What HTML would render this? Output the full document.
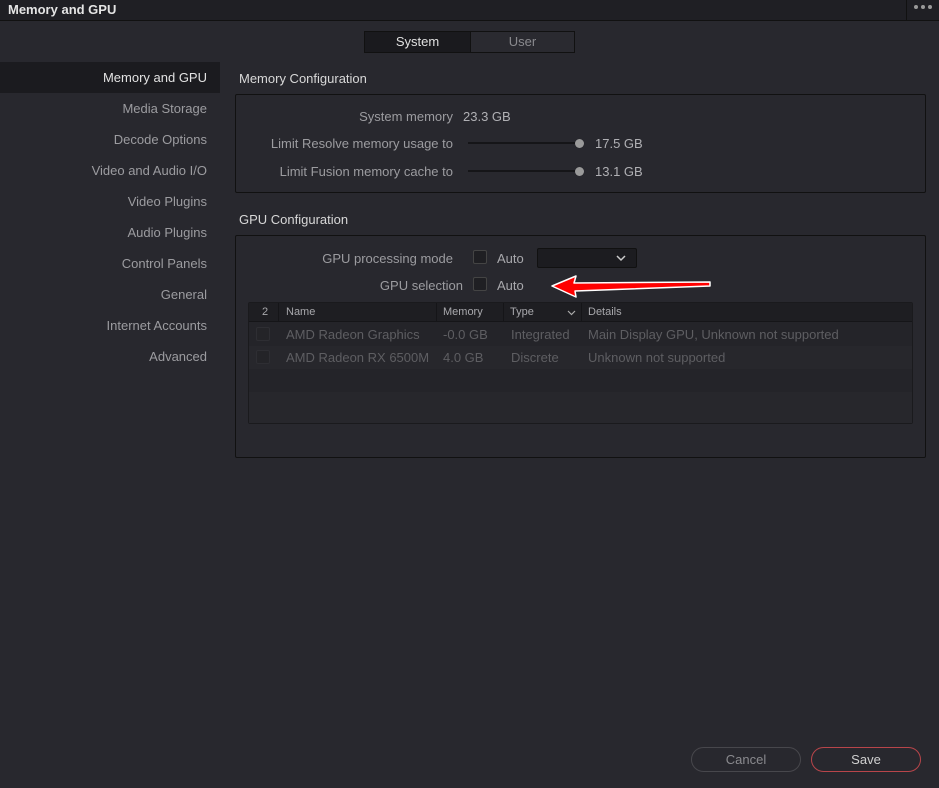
<!DOCTYPE html>
<html><head><meta charset="utf-8"><style>
*{margin:0;padding:0;box-sizing:border-box}
body{width:939px;height:788px;background:#28282e;font-family:"Liberation Sans",sans-serif;font-size:13px;color:#a8a8ac;position:relative;overflow:hidden}
.a{position:absolute;white-space:nowrap}
.title{left:0;top:0;width:939px;height:21px;background:#1f1f24;border-bottom:1px solid #111;color:#e4e4e4;font-weight:bold;font-size:13px;padding:2px 8px}
.dots{left:906px;top:0;width:1px;height:21px;background:#111}
.seg{left:364px;top:31px;width:211px;height:22px;border:1px solid #111;background:#2a2a30}
.side{right:732px;text-align:right;color:#9c9ca0}
.box{border:1px solid #111;border-radius:2px}
.cb{width:14px;height:14px;border:1px solid #444;background:#1f1f23;border-radius:2px}
.lbl{text-align:right;color:#9c9ca0}
.slider{height:2px;background:#151518}
.knob{width:9px;height:9px;border-radius:50%;background:#9a9a9a}
.btn{height:25px;border-radius:13px;text-align:center;line-height:23px;font-size:13px}
</style></head><body>
<div class="a title">Memory and GPU</div>
<div class="a dots"></div>
<svg class="a" style="left:913px;top:4px" width="20" height="6"><circle cx="3" cy="3" r="2" fill="#999"/><circle cx="10" cy="3" r="2" fill="#999"/><circle cx="17" cy="3" r="2" fill="#999"/></svg>
<div class="a seg"><div class="a" style="left:0;top:0;width:105px;height:20px;background:#1a1a1e;color:#e0e0e0;text-align:center;line-height:20px">System</div><div class="a" style="left:105px;top:0;width:1px;height:20px;background:#111"></div><div class="a" style="left:106px;top:0;width:103px;height:20px;color:#8a8a8e;text-align:center;line-height:20px">User</div></div>

<div class="a" style="left:0;top:62px;width:220px;height:31px;background:#1b1b1f"></div>
<div class="a side" style="top:70px;color:#e2e2e2">Memory and GPU</div>
<div class="a side" style="top:101px">Media Storage</div>
<div class="a side" style="top:132px">Decode Options</div>
<div class="a side" style="top:163px">Video and Audio I/O</div>
<div class="a side" style="top:194px">Video Plugins</div>
<div class="a side" style="top:225px">Audio Plugins</div>
<div class="a side" style="top:256px">Control Panels</div>
<div class="a side" style="top:287px">General</div>
<div class="a side" style="top:318px">Internet Accounts</div>
<div class="a side" style="top:349px">Advanced</div>

<div class="a" style="left:239px;top:71px;color:#d8d8d8">Memory Configuration</div>
<div class="a box" style="left:235px;top:94px;width:691px;height:99px"></div>
<div class="a lbl" style="right:486px;top:109px">System memory</div>
<div class="a" style="left:463px;top:109px;color:#b0b0b4">23.3 GB</div>
<div class="a lbl" style="right:486px;top:136px">Limit Resolve memory usage to</div>
<div class="a slider" style="left:468px;top:142px;width:110px"></div>
<div class="a knob" style="left:575px;top:139px"></div>
<div class="a" style="left:595px;top:136px;color:#b0b0b4">17.5 GB</div>
<div class="a lbl" style="right:486px;top:164px">Limit Fusion memory cache to</div>
<div class="a slider" style="left:468px;top:170px;width:110px"></div>
<div class="a knob" style="left:575px;top:167px"></div>
<div class="a" style="left:595px;top:164px;color:#b0b0b4">13.1 GB</div>

<div class="a" style="left:239px;top:212px;color:#d8d8d8">GPU Configuration</div>
<div class="a box" style="left:235px;top:235px;width:691px;height:223px"></div>
<div class="a lbl" style="right:486px;top:251px">GPU processing mode</div>
<div class="a cb" style="left:473px;top:250px"></div>
<div class="a" style="left:497px;top:251px">Auto</div>
<div class="a" style="left:537px;top:248px;width:100px;height:20px;background:#1c1c20;border:1px solid #111;border-radius:2px"><svg class="a" style="left:78px;top:6px" width="10" height="7"><path d="M1 1 L5 5 L9 1" fill="none" stroke="#ccc" stroke-width="1.5"/></svg></div>
<div class="a lbl" style="right:476px;top:278px">GPU selection</div>
<div class="a cb" style="left:473px;top:277px"></div>
<div class="a" style="left:497px;top:278px">Auto</div>
<svg class="a" style="left:548px;top:274px" width="166" height="26"><path d="M4 12 L28 2 L26 9 L162 8 L162 12 L27 17 L28 23 Z" fill="#f00" stroke="#fff" stroke-width="1.5" stroke-linejoin="round"/></svg>

<div class="a" style="left:248px;top:302px;width:665px;height:122px;background:#242429;border:1px solid #1a1a1d;border-radius:2px"></div>
<div class="a" style="left:249px;top:303px;width:663px;height:19px;background:#1e1e22;border-bottom:1px solid #151518"></div>
<div class="a" style="left:278px;top:303px;width:1px;height:19px;background:#151518"></div>
<div class="a" style="left:436px;top:303px;width:1px;height:19px;background:#151518"></div>
<div class="a" style="left:503px;top:303px;width:1px;height:19px;background:#151518"></div>
<div class="a" style="left:581px;top:303px;width:1px;height:19px;background:#151518"></div>
<div class="a" style="left:262px;top:306px;font-size:11px">2</div>
<div class="a" style="left:286px;top:306px;font-size:11px">Name</div>
<div class="a" style="left:443px;top:306px;font-size:11px">Memory</div>
<div class="a" style="left:510px;top:306px;font-size:11px">Type</div>
<svg class="a" style="left:567px;top:310px" width="9" height="6"><path d="M1 1 L4.5 4.5 L8 1" fill="none" stroke="#aaa" stroke-width="1.2"/></svg>
<div class="a" style="left:588px;top:306px;font-size:11px">Details</div>
<div class="a" style="left:249px;top:346px;width:663px;height:23px;background:#27272c"></div>
<div class="a" style="left:249px;top:392px;width:663px;height:31px;background:#27272c"></div>
<div class="a cb" style="left:256px;top:327px;border-color:#2e2e33;background:#242428"></div>
<div class="a cb" style="left:256px;top:350px;border-color:#2e2e33;background:#242428"></div>
<div class="a" style="left:286px;top:327px;color:#5e5e62">AMD Radeon Graphics</div>
<div class="a" style="left:443px;top:327px;color:#5e5e62">-0.0 GB</div>
<div class="a" style="left:511px;top:327px;color:#5e5e62">Integrated</div>
<div class="a" style="left:588px;top:327px;color:#5e5e62">Main Display GPU, Unknown not supported</div>
<div class="a" style="left:286px;top:350px;color:#5e5e62">AMD Radeon RX 6500M</div>
<div class="a" style="left:443px;top:350px;color:#5e5e62">4.0 GB</div>
<div class="a" style="left:511px;top:350px;color:#5e5e62">Discrete</div>
<div class="a" style="left:588px;top:350px;color:#5e5e62">Unknown not supported</div>

<div class="a btn" style="left:691px;top:747px;width:110px;border:1px solid #47474c;color:#8a8a8e">Cancel</div>
<div class="a btn" style="left:811px;top:747px;width:110px;border:1px solid #b8454a;color:#d0d0d0">Save</div>
</body></html>
